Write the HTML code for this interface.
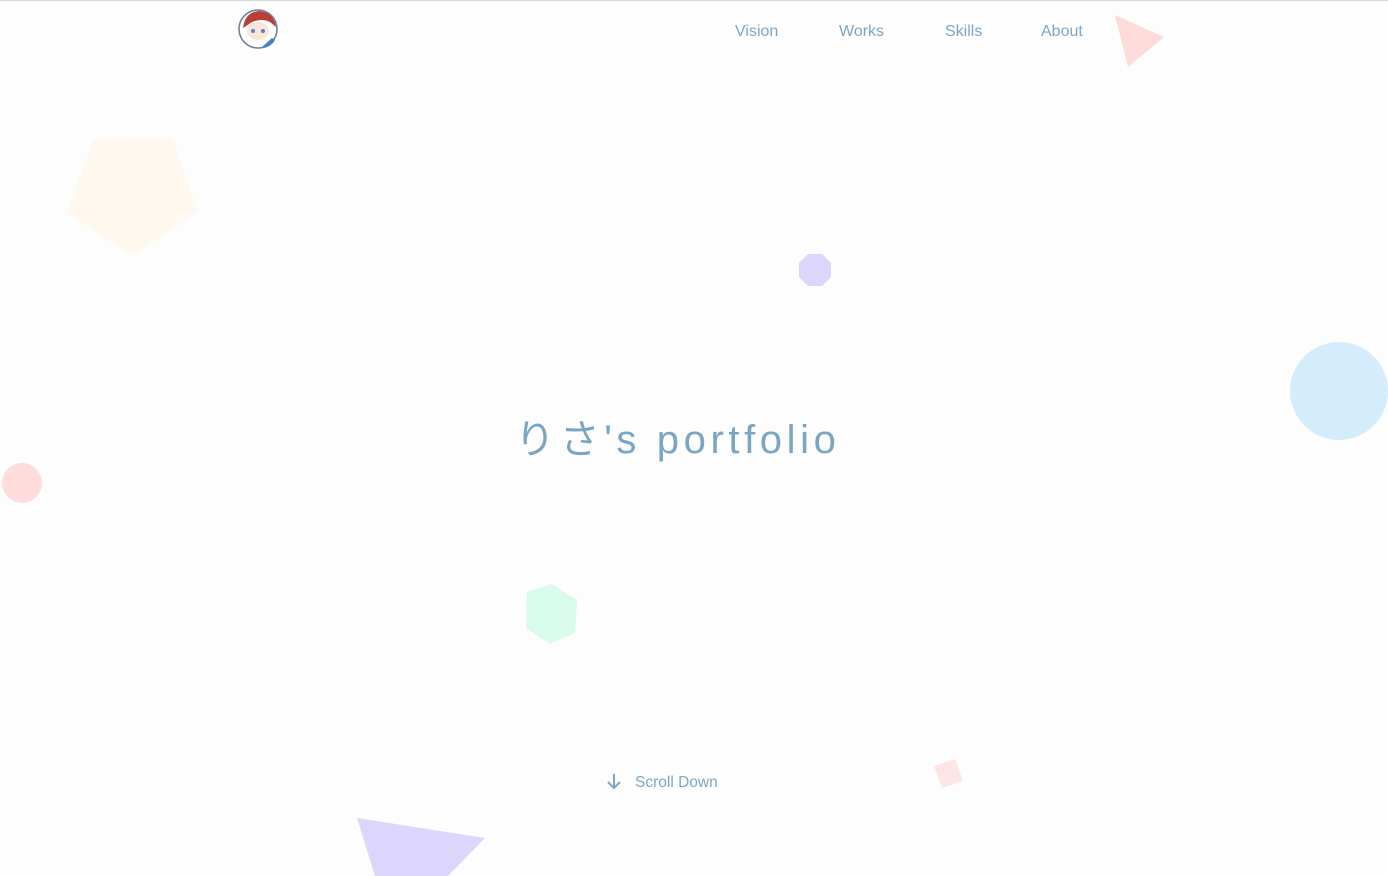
<!DOCTYPE html>
<html><head><meta charset="utf-8"><style>
html,body{margin:0;padding:0;width:1388px;height:876px;overflow:hidden;background:#fdfdfd;font-family:"Liberation Sans","Noto Sans CJK JP",sans-serif}
.top{position:absolute;left:0;top:0;width:1388px;height:1px;background:#d8d8d8}
.nav a{position:absolute;top:23px;font-size:16px;color:#7ea6c4;text-decoration:none}
.title{position:absolute;left:515px;top:407px;font-size:40px;letter-spacing:4.6px;color:#7aa6c2;white-space:nowrap;font-family:"Liberation Sans","Noto Sans CJK JP",sans-serif}
.scroll{position:absolute;left:635px;top:774px;font-size:15.5px;color:#7ea6c4}
svg{position:absolute;left:0;top:0}
</style></head><body>
<svg width="1388" height="876">
<polygon points="1115,15 1164,37 1128,67" fill="#fcdbd9"/>
<polygon points="93,140 172,137 198,211 132,256 67,213" fill="#fef8ee"/>
<polygon points="808,254 822,254 831,263 831,277 822,286 808,286 799,277 799,263" fill="#ddd5fc"/>
<circle cx="1339" cy="391" r="49" fill="#d5ecfc"/>
<circle cx="22" cy="483" r="20" fill="#fddcdb"/>
<polygon points="527,592 552,584 577,600 575,633 550,644 526,628" fill="#d8fbeb"/>
<polygon points="934,766 955,759 963,781 942,788" fill="#fde5e7"/>
<polygon points="357,818 485,838 448,876 375,876" fill="#dcd5fc"/>
<circle cx="258" cy="29" r="19" fill="#fff" stroke="#6a7d99" stroke-width="1.5"/>
<path d="M243,28 Q245,12 259,11 Q274,12 276,27 L270,22 Q262,18 252,22 Z" fill="#b8403c"/>
<ellipse cx="258" cy="31" rx="11" ry="9" fill="#fbe5d8"/>
<circle cx="253" cy="31" r="2" fill="#5a7fc0"/><circle cx="263" cy="31" r="2" fill="#5a7fc0"/>
<path d="M262,47 L272,38 L275,40 Q272,46 264,48 Z" fill="#4a7fc4"/>
<path d="M614,774 V788 M608,782 L614,788 L620,782" stroke="#7ea6c4" stroke-width="2" fill="none"/>
</svg>
<div class="top"></div>
<div class="nav"><a style="left:735px">Vision</a><a style="left:839px">Works</a><a style="left:945px">Skills</a><a style="left:1041px">About</a></div>
<div class="title">りさ's portfolio</div>
<div class="scroll">Scroll Down</div>
</body></html>
